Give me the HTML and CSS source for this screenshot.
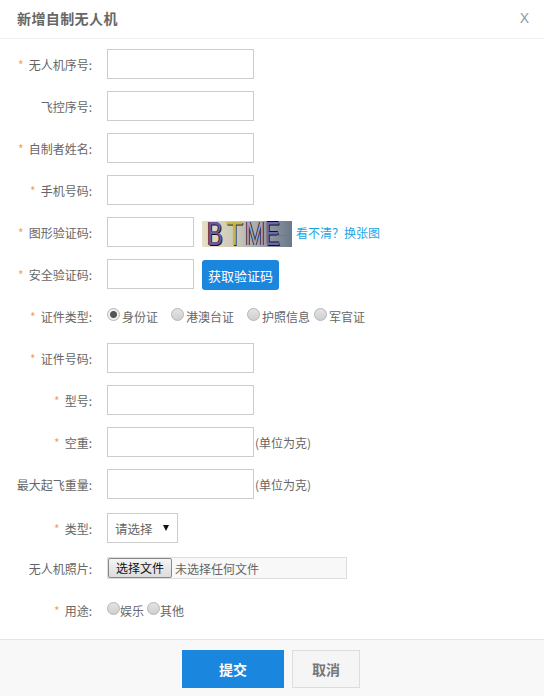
FILE: index.html
```html
<!DOCTYPE html>
<html lang="zh-CN">
<head>
    <meta charset="UTF-8">
    <meta name="viewport" content="width=device-width, initial-scale=1.0">
    <title>新增自制无人机</title>
    <link rel="stylesheet" href="styles.css">
</head>
<body>

    <div class="dialog">
        <div class="dialog-head">
            <h2>新增自制无人机</h2>
            <span class="close">X</span>
        </div>

        <form class="dialog-body">
            <div class="form-row">
                <label class="field-label"><em>*</em>无人机序号:</label>
                <input type="text" class="text-input">
            </div>
            <div class="form-row">
                <label class="field-label">飞控序号:</label>
                <input type="text" class="text-input">
            </div>
            <div class="form-row">
                <label class="field-label"><em>*</em>自制者姓名:</label>
                <input type="text" class="text-input">
            </div>
            <div class="form-row">
                <label class="field-label"><em>*</em>手机号码:</label>
                <input type="text" class="text-input">
            </div>
            <div class="form-row">
                <label class="field-label"><em>*</em>图形验证码:</label>
                <input type="text" class="text-input short">
                <div class="captcha">
                    <span class="c1">B</span><span class="c2">T</span><span class="c3">M</span><span class="c4">E</span>
                    <i class="noise"></i>
                    <i class="noise low"></i>
                </div>
                <a class="refresh" href="#">看不清？换张图</a>
            </div>
            <div class="form-row">
                <label class="field-label"><em>*</em>安全验证码:</label>
                <input type="text" class="text-input short">
                <button type="button" class="code-btn">获取验证码</button>
            </div>
            <div class="form-row radio-row">
                <label class="field-label"><em>*</em>证件类型:</label>
                <div class="radios">
                    <label class="radio wide"><input type="radio" name="cert" checked>身份证</label>
                    <label class="radio wide2"><input type="radio" name="cert">港澳台证</label>
                    <label class="radio wide3"><input type="radio" name="cert">护照信息</label>
                    <label class="radio"><input type="radio" name="cert">军官证</label>
                </div>
            </div>
            <div class="form-row">
                <label class="field-label"><em>*</em>证件号码:</label>
                <input type="text" class="text-input">
            </div>
            <div class="form-row">
                <label class="field-label"><em>*</em>型号:</label>
                <input type="text" class="text-input">
            </div>
            <div class="form-row">
                <label class="field-label"><em>*</em>空重:</label>
                <input type="text" class="text-input">
                <span class="unit">(单位为克)</span>
            </div>
            <div class="form-row">
                <label class="field-label">最大起飞重量:</label>
                <input type="text" class="text-input">
                <span class="unit">(单位为克)</span>
            </div>
            <div class="form-row select-row">
                <label class="field-label"><em>*</em>类型:</label>
                <div class="select-box">
                    <span>请选择</span>
                    <i class="arrow"></i>
                </div>
            </div>
            <div class="form-row file-row">
                <label class="field-label">无人机照片:</label>
                <div class="file-box">
                    <span class="file-btn">选择文件</span>
                    <span class="file-name">未选择任何文件</span>
                </div>
            </div>
            <div class="form-row use-row">
                <label class="field-label"><em>*</em>用途:</label>
                <div class="radios tight">
                    <label class="radio"><input type="radio" name="use">娱乐</label>
                    <label class="radio"><input type="radio" name="use">其他</label>
                </div>
            </div>
        </form>

        <div class="dialog-foot">
            <button type="button" class="btn-submit">提交</button>
            <button type="button" class="btn-cancel">取消</button>
        </div>
    </div>

</body>
</html>
```

FILE: styles.css
```css
* {
    box-sizing: border-box;
}

html, body {
    margin: 0;
    padding: 0;
}

body {
    width: 544px;
    height: 696px;
    overflow: hidden;
    background-color: #fff;
    color: #666;
    font-family: "Noto Sans CJK SC", "Liberation Sans", sans-serif;
    font-size: 12px;
}

.dialog {
    display: flex;
    flex-direction: column;
    height: 696px;
}

.dialog-head {
    display: flex;
    justify-content: space-between;
    align-items: center;
    height: 39px;
    padding: 0 15px 2px 17px;
    border-bottom: 1px solid #eee;
}

.dialog-head h2 {
    margin: 0;
    font-size: 14px;
    font-weight: bold;
    letter-spacing: 0.4px;
    color: #666;
}

.close {
    font-family: "Liberation Sans", sans-serif;
    font-size: 14px;
    color: #8d9bab;
}

.dialog-body {
    flex: 1;
    padding-top: 10px;
}

.form-row {
    display: flex;
    align-items: center;
    height: 30px;
    margin-bottom: 12px;
}

.field-label {
    width: 92px;
    margin-right: 15px;
    flex-shrink: 0;
    text-align: right;
    white-space: nowrap;
}

.field-label em {
    margin-right: 5px;
    font-style: normal;
    color: #f5a05f;
}

.text-input {
    width: 147px;
    height: 30px;
    padding: 0 8px;
    border: 1px solid #ccc;
    background-color: #fff;
}

.text-input.short {
    width: 87px;
}

.captcha {
    display: flex;
    flex-shrink: 0;
    align-items: center;
    width: 90px;
    height: 26px;
    margin-top: 4px;
    margin-left: 8px;
    padding-left: 5px;
    position: relative;
    background: linear-gradient(to right, #e8dfc4, #c9c6b8 40%, #69788c);
    font-family: "Liberation Sans", sans-serif;
    font-size: 33px;
    line-height: 26px;
}

.captcha span {
    display: block;
    transform-origin: left center;
}

.captcha .c1 {
    width: 19px;
    color: #6f56a3;
    transform: scaleX(0.72);
    text-shadow: 1px 1px 0 #111, -1px 0 0 #111;
}

.captcha .c2 {
    width: 19px;
    color: #c2b84f;
    transform: scaleX(0.84);
    text-shadow: 1px 1px 0 #222;
}

.captcha .c3 {
    width: 20px;
    color: #a29fc9;
    transform: scaleX(0.72);
    text-shadow: 1px 0 0 #111, -1px 0 0 #111;
}

.captcha .c4 {
    width: 15px;
    color: #6a68b5;
    transform: scaleX(0.68);
    text-shadow: 1px 1px 0 #111, 0 -1px 0 #111;
}

.captcha .noise {
    position: absolute;
    left: 75px;
    top: 14px;
    width: 13px;
    height: 1px;
    background-color: #2e9d78;
}

.captcha .noise.low {
    left: 84px;
    top: 24px;
    width: 5px;
}

.refresh {
    margin-left: 4px;
    color: #1ea4e4;
    text-decoration: none;
    white-space: nowrap;
}

.code-btn {
    width: 77px;
    height: 30px;
    margin-top: 2px;
    margin-left: 8px;
    padding: 0;
    border: none;
    border-radius: 3px;
    background-color: #1a86dd;
    color: #fff;
    font-family: inherit;
    font-size: 13px;
}

.radios {
    display: flex;
    align-items: center;
}

.radio {
    display: flex;
    align-items: center;
    white-space: nowrap;
}

.radio.wide { width: 64px; }
.radio.wide2 { width: 76px; }
.radio.wide3 { width: 67px; }

.radio input {
    appearance: none;
    width: 13px;
    height: 13px;
    margin: -3px 2px 0 0;
    border: 1px solid #b5b5b5;
    border-radius: 50%;
    background: linear-gradient(#e4e4e4, #cfcfcf);
}

.radio input:checked {
    background: radial-gradient(circle, #555 0, #555 3px, #f0f0f0 4px);
}

.unit {
    margin-left: 1px;
}

.select-row {
    margin-top: 14px;
    margin-bottom: 14px;
}

.select-box {
    display: flex;
    justify-content: space-between;
    align-items: center;
    width: 71px;
    height: 30px;
    padding: 0 8px 0 7px;
    font-size: 12.5px;
    border: 1px solid #ccc;
}

.arrow {
    width: 0;
    height: 0;
    border-left: 3px solid transparent;
    border-right: 3px solid transparent;
    border-top: 6px solid #111;
}

.file-row {
    height: 22px;
    margin-bottom: 20px;
}

.file-box {
    display: flex;
    align-items: center;
    width: 240px;
    height: 22px;
    border: 1px solid #ddd;
    background-color: #f8f8f8;
}

.file-btn {
    width: 64px;
    height: 20px;
    border: 1px solid #888;
    border-radius: 2px;
    margin-right: 3px;
    background: linear-gradient(#f4f4f4, #dcdcdc);
    color: #111;
    line-height: 18px;
    text-align: center;
}

.use-row {
    height: 22px;
    margin-bottom: 0;
}

.radios.tight .radio {
    margin-right: 3px;
}

.radios.tight .radio input {
    margin-right: 0;
}

.dialog-foot {
    display: flex;
    justify-content: center;
    gap: 8px;
    height: 57px;
    padding: 10px 2px 0 0;
    border-top: 1px solid #e5e5e5;
    background-color: #f8f8f8;
}

.btn-submit, .btn-cancel {
    height: 38px;
    padding: 0;
    font-family: inherit;
    font-size: 14px;
    font-weight: bold;
}

.btn-submit {
    width: 102px;
    border: none;
    background-color: #1a86dd;
    color: #fff;
}

.btn-cancel {
    width: 68px;
    border: 1px solid #ddd;
    background-color: #f5f5f5;
    color: #777;
}
```
